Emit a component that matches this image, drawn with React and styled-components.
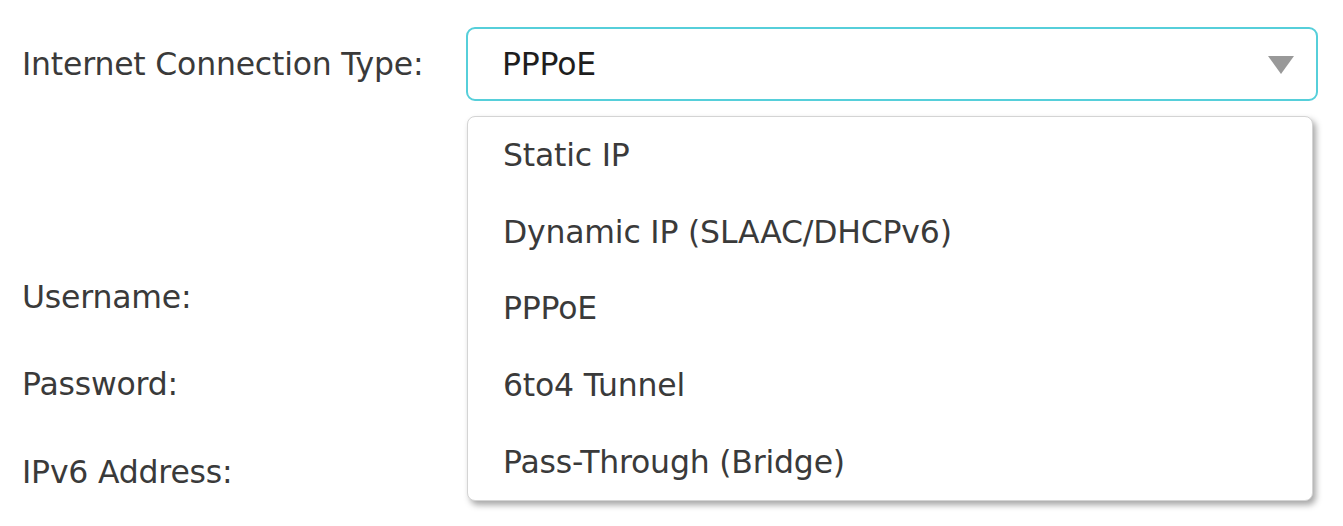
import React from "react";
import styled, { createGlobalStyle } from "styled-components";

const GlobalStyle = createGlobalStyle`
  body {
    margin: 0;
    background: #fff;
    font-family: "DejaVu Sans", Verdana, sans-serif;
    color: #3a3a3a;
  }
`;

const Page = styled.div`
  padding: 27px 25px 0 22px;
  height: 526px;
  box-sizing: border-box;
`;

const Form = styled.div`
  display: flex;
  flex-direction: column;
`;

const Row = styled.div`
  display: grid;
  grid-template-columns: 444px 1fr;
  align-items: center;
  height: ${(p) => p.h || 74}px;
  margin-top: ${(p) => p.top || 0}px;
`;

const Label = styled.label`
  font-size: 31.5px;
  letter-spacing: -0.2px;
  color: #3a3a3a;
  white-space: nowrap;
`;

const Field = styled.div`
  position: relative;
  height: 100%;
`;

const SelectBox = styled.div`
  height: 74px;
  box-sizing: border-box;
  border: 2px solid #56cfda;
  border-radius: 9px;
  display: flex;
  align-items: center;
  justify-content: space-between;
  padding: 0 22px 0 34px;
  font-size: 31.5px;
  letter-spacing: -0.2px;
  color: #1e1e1e;
`;

const Arrow = styled.span`
  width: 0;
  height: 0;
  border-left: 13px solid transparent;
  border-right: 13px solid transparent;
  border-top: 18px solid #999;
  margin-top: 2px;
`;

const Menu = styled.ul`
  position: absolute;
  top: 89px;
  left: 1px;
  right: 5px;
  margin: 0;
  padding: 0;
  list-style: none;
  background: #fff;
  border: 1px solid #d4d4d4;
  border-radius: 8px;
  box-shadow: 3px 4px 6px rgba(0, 0, 0, 0.35);
  z-index: 2;
`;

const Item = styled.li`
  height: 76.6px;
  display: flex;
  align-items: center;
  padding-left: 35px;
  font-size: 31.5px;
  letter-spacing: -0.2px;
  color: #3a3a3a;
`;

const options = [
  "Static IP",
  "Dynamic IP (SLAAC/DHCPv6)",
  "PPPoE",
  "6to4 Tunnel",
  "Pass-Through (Bridge)",
];

function App() {
  return (
    <Page>
      <GlobalStyle />
      <Form>
        <Row>
          <Label>Internet Connection Type:</Label>
          <Field>
            <SelectBox>
              PPPoE
              <Arrow />
            </SelectBox>
            <Menu>
              {options.map((o) => (
                <Item key={o}>{o}</Item>
              ))}
            </Menu>
          </Field>
        </Row>
        <Row top={159}>
          <Label>Username:</Label>
          <Field />
        </Row>
        <Row top={13}>
          <Label>Password:</Label>
          <Field />
        </Row>
        <Row top={14}>
          <Label>IPv6 Address:</Label>
          <Field />
        </Row>
      </Form>
    </Page>
  );
}

export default App;
